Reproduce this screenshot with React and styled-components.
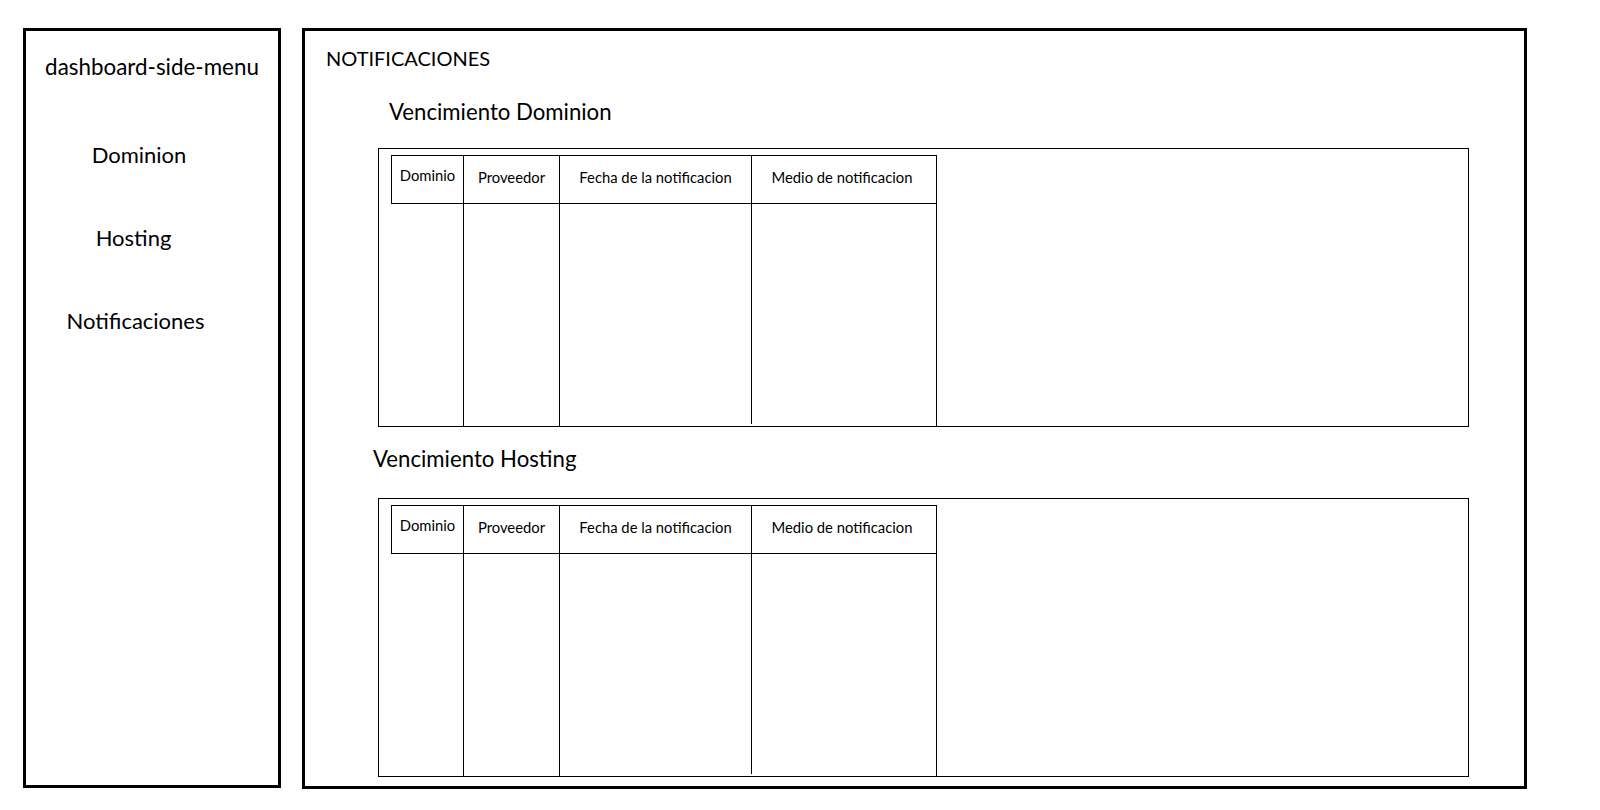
import React from "react";
import styled, { createGlobalStyle } from "styled-components";

const GlobalStyle = createGlobalStyle`
  html, body {
    margin: 0;
    padding: 0;
    background: #fff;
  }
  body {
    font-family: "Lato", "Open Sans", sans-serif;
    color: #000;
  }
`;

const Page = styled.div`
  display: flex;
  gap: 21px;
  padding: 28px 0 0 23px;
  height: 761px;
`;

const SideMenu = styled.aside`
  box-sizing: border-box;
  width: 258px;
  height: 760px;
  border: 3px solid #000;
  display: flex;
  flex-direction: column;
  align-items: center;
  padding-top: 23px;
`;

const MenuTitle = styled.div`
  font-size: 22.4px;
  line-height: 26px;
`;

const MenuList = styled.nav`
  display: flex;
  flex-direction: column;
  align-items: center;
  gap: 57px;
  margin-top: 62px;
  padding-right: 33px;
`;

const MenuItem = styled.a`
  font-size: 22px;
  line-height: 26px;
  color: #000;
  text-decoration: none;
  cursor: pointer;
  margin-left: ${(p) => Math.max(p.$nudge || 0, 0) * 2}px;
  margin-right: ${(p) => Math.max(-(p.$nudge || 0), 0) * 2}px;
`;

const Main = styled.main`
  box-sizing: border-box;
  width: 1225px;
  height: 761px;
  border: 3px solid #000;
  padding: 15px 0 0 21px;
`;

const PageTitle = styled.h1`
  margin: 0;
  font-size: 20px;
  line-height: 24px;
  font-weight: normal;
`;

const Section = styled.section`
  margin-left: 52px;
  margin-top: ${(p) => p.$top}px;
`;

const SectionTitle = styled.h2`
  margin: 0 0 ${(p) => p.$gap}px ${(p) => p.$indent}px;
  font-size: 22.2px;
  line-height: 26px;
  font-weight: normal;
`;

const Frame = styled.div`
  box-sizing: border-box;
  width: 1091px;
  height: 279px;
  border: 1px solid #000;
  padding: 6px 0 0 12px;
  display: flex;
`;

const Grid = styled.div`
  display: grid;
  grid-template-columns: 73px 96px 192px 185px;
  grid-template-rows: 49px 1fr;
  flex: 0 0 auto;
`;

const HeadCell = styled.div`
  box-sizing: border-box;
  border-top: 1px solid #000;
  border-bottom: 1px solid #000;
  border-right: 1px solid #000;
  border-left: ${(p) => (p.$first ? "1px solid #000" : "none")};
  display: flex;
  justify-content: center;
  align-items: flex-start;
  padding-top: ${(p) => (p.$first ? 9.5 : 11.5)}px;
  padding-right: ${(p) => (p.$last ? 4 : 0)}px;
  font-size: 14.8px;
  line-height: 18px;
  white-space: nowrap;
`;

const BodyCell = styled.div`
  box-sizing: border-box;
  border-right: 1px solid #000;
  align-self: start;
  height: ${(p) => (p.$short ? "calc(100% - 2px)" : "100%")};
`;

const columns = [
  "Dominio",
  "Proveedor",
  "Fecha de la notificacion",
  "Medio de notificacion",
];

function NotificationTable() {
  return (
    <Frame>
      <Grid>
        {columns.map((c, i) => (
          <HeadCell key={c} $first={i === 0} $last={i === columns.length - 1}>
            {c}
          </HeadCell>
        ))}
        {columns.map((c, i) => (
          <BodyCell key={c} $short={i === 2} />
        ))}
      </Grid>
    </Frame>
  );
}

export default function App() {
  return (
    <>
      <GlobalStyle />
      <Page>
        <SideMenu>
          <MenuTitle>dashboard-side-menu</MenuTitle>
          <MenuList>
            <MenuItem $nudge={3.5}>Dominion</MenuItem>
            <MenuItem $nudge={-2}>Hosting</MenuItem>
            <MenuItem>Notificaciones</MenuItem>
          </MenuList>
        </SideMenu>
        <Main>
          <PageTitle>NOTIFICACIONES</PageTitle>
          <Section $top={29}>
            <SectionTitle $indent={11} $gap={23}>
              Vencimiento Dominion
            </SectionTitle>
            <NotificationTable />
          </Section>
          <Section $top={19}>
            <SectionTitle $indent={-5} $gap={26}>
              Vencimiento Hosting
            </SectionTitle>
            <NotificationTable />
          </Section>
        </Main>
      </Page>
    </>
  );
}
